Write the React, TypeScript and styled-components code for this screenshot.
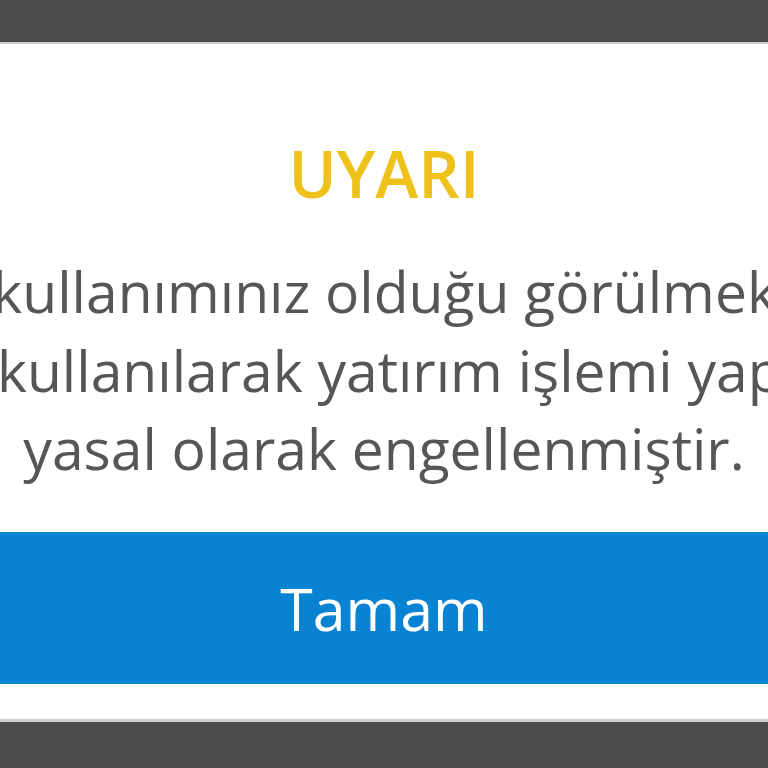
import React from "react";
import styled, { createGlobalStyle } from "styled-components";

const GlobalStyle = createGlobalStyle`
  html, body {
    margin: 0;
    padding: 0;
    background: #4b4b4b;
    overflow: hidden;
  }
  body {
    font-family: "Open Sans", "Noto Sans", sans-serif;
  }
`;

const messageLines = [
  "VPN kullanımınız olduğu görülmektedir",
  "VPN kullanılarak yatırım işlemi yapmak",
  "yasal olarak engellenmiştir.",
];

function App() {
  return (
    <>
      <GlobalStyle />
      <Screen>
        <Dialog>
          <Title>UYARI</Title>
          <Message>
            {messageLines.map((line) => (
              <Line key={line}>
                <span>{line}</span>
              </Line>
            ))}
          </Message>
          <OkButton type="button">Tamam</OkButton>
        </Dialog>
      </Screen>
    </>
  );
}

export default App;

const Screen = styled.div`
  width: 768px;
  height: 768px;
  background: #4b4b4b;
  padding-top: 42px;
  box-sizing: border-box;
  overflow: hidden;
`;

const Dialog = styled.div`
  background: #ffffff;
  border-top: 2px solid #c9c9c9;
  border-bottom: 3px solid #cfcfcf;
  padding: 85px 0 35px;
  display: flex;
  flex-direction: column;
`;

const Title = styled.h1`
  margin: 0;
  text-align: center;
  color: #eec21b;
  font-size: 65px;
  font-weight: 600;
  line-height: normal;
`;

const Message = styled.div`
  margin-top: 35px;
  display: flex;
  flex-direction: column;
  color: #565656;
  font-size: 57px;
  line-height: 78.5px;
`;

const Line = styled.div`
  display: flex;
  justify-content: center;
  white-space: nowrap;
`;

const OkButton = styled.button`
  margin-top: 44px;
  height: 152px;
  border: none;
  background: #0883d3;
  color: #ffffff;
  font-family: "Open Sans", "Noto Sans", sans-serif;
  font-size: 59px;
  font-weight: 400;
  line-height: normal;
  padding: 0;
`;
